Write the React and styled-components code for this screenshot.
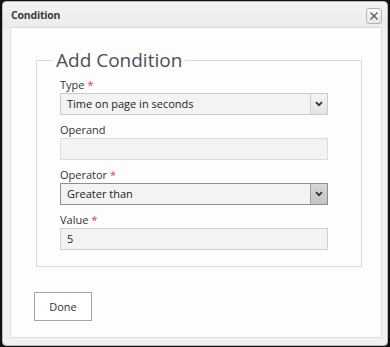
import styled, { createGlobalStyle } from "styled-components";

const GlobalStyle = createGlobalStyle`
  html, body {
    margin: 0;
    padding: 0;
    background: #111;
  }
  body {
    font-family: "Open Sans", "Liberation Sans", sans-serif;
    padding: 1px 2px 1px 2px;
  }
`;

const Dialog = styled.div`
  box-sizing: border-box;
  width: 386px;
  height: 345px;
  border: 1px solid #b9b9b9;
  border-radius: 4px;
  background: linear-gradient(#f3f3f3, #ececec 26px, #f1f1f1 27px, #f1f1f1);
  display: flex;
  flex-direction: column;
  padding: 0 5px 7px 7px;
`;

const TitleBar = styled.div`
  height: 25px;
  display: flex;
  align-items: center;
  justify-content: space-between;
  padding: 0 0 0 1px;
`;

const Title = styled.span`
  font-size: 10.5px;
  font-weight: 700;
  color: #3a3a3a;
  letter-spacing: -0.2px;
`;

const CloseButton = styled.button`
  box-sizing: border-box;
  width: 16px;
  height: 16px;
  padding: 0;
  margin-top: 3px;
  border: 1px solid #b4b4b4;
  border-radius: 3px;
  background: linear-gradient(#fafafa, #e6e6e6);
  display: flex;
  align-items: center;
  justify-content: center;
`;

const Panel = styled.div`
  flex: 1;
  background: #fdfdfd;
  border: 1px solid #dcdcdc;
  padding: 21px 19px 0 25px;
`;

const Fieldset = styled.fieldset`
  margin: 0;
  border: 1px solid #d9d9d9;
  padding: 0 33px 16px 23px;
`;

const Legend = styled.legend`
  margin-left: -7px;
  padding: 0 3px;
  font-size: 19px;
  line-height: 22px;
  color: #505050;
`;

const Field = styled.div`
  display: flex;
  flex-direction: column;
  margin-top: ${(p) => (p.$first ? "6px" : "7px")};
`;

const Label = styled.label`
  font-size: 11px;
  line-height: 16px;
  color: #333;
`;

const Required = styled.span`
  color: #e23b3b;
  margin-left: 3px;
`;

const Input = styled.div`
  box-sizing: border-box;
  height: 22px;
  border: 1px solid ${(p) => (p.$disabled ? "#dedede" : "#cfcfcf")};
  background: #f3f3f3;
  font-size: 11px;
  line-height: 20px;
  padding-left: 6px;
  color: #222;
`;

const Select = styled.div`
  box-sizing: border-box;
  height: 22px;
  border: 1px solid ${(p) => (p.$active ? "#8e8e8e" : "#cbcbcb")};
  background: #f3f3f3;
  display: flex;
  align-items: stretch;
`;

const SelectText = styled.span`
  flex: 1;
  font-size: 11px;
  line-height: 20px;
  padding-left: 6px;
  color: #222;
`;

const Arrow = styled.span`
  width: 16px;
  border-left: 1px solid ${(p) => (p.$active ? "#a0a0a0" : "#cfcfcf")};
  background: ${(p) =>
    p.$active
      ? "linear-gradient(#d6d6d6, #c4c4c4)"
      : "linear-gradient(#f4f4f4, #e4e4e4)"};
  display: flex;
  align-items: center;
  justify-content: center;
`;

const Footer = styled.div`
  padding-top: 25px;
`;

const DoneButton = styled.button`
  box-sizing: border-box;
  width: 58px;
  height: 29px;
  margin-left: -2px;
  border: 1px solid #a5a5a5;
  background: #fff;
  font-family: "Open Sans", "Liberation Sans", sans-serif;
  font-size: 11px;
  color: #333;
  padding: 0;
`;

function Chevron() {
  return (
    <svg width="8" height="6" viewBox="0 0 8 6">
      <path d="M1 1.2 L4 4.2 L7 1.2" fill="none" stroke="#333" strokeWidth="1.8" />
    </svg>
  );
}

function SelectBox({ value, active }) {
  return (
    <Select $active={active}>
      <SelectText>{value}</SelectText>
      <Arrow $active={active}>
        <Chevron />
      </Arrow>
    </Select>
  );
}

export default function App() {
  return (
    <>
      <GlobalStyle />
      <Dialog>
        <TitleBar>
          <Title>Condition</Title>
          <CloseButton aria-label="Close">
            <svg width="10" height="10" viewBox="0 0 10 10">
              <path d="M1.5 1.5 L8.5 8.5 M8.5 1.5 L1.5 8.5" stroke="#555" strokeWidth="1.3" />
            </svg>
          </CloseButton>
        </TitleBar>
        <Panel>
          <Fieldset>
            <Legend>Add Condition</Legend>
            <Field $first>
              <Label>
                Type<Required>*</Required>
              </Label>
              <SelectBox value="Time on page in seconds" />
            </Field>
            <Field>
              <Label>Operand</Label>
              <Input $disabled />
            </Field>
            <Field>
              <Label>
                Operator<Required>*</Required>
              </Label>
              <SelectBox value="Greater than" active />
            </Field>
            <Field>
              <Label>
                Value<Required>*</Required>
              </Label>
              <Input>5</Input>
            </Field>
          </Fieldset>
          <Footer>
            <DoneButton>Done</DoneButton>
          </Footer>
        </Panel>
      </Dialog>
    </>
  );
}
